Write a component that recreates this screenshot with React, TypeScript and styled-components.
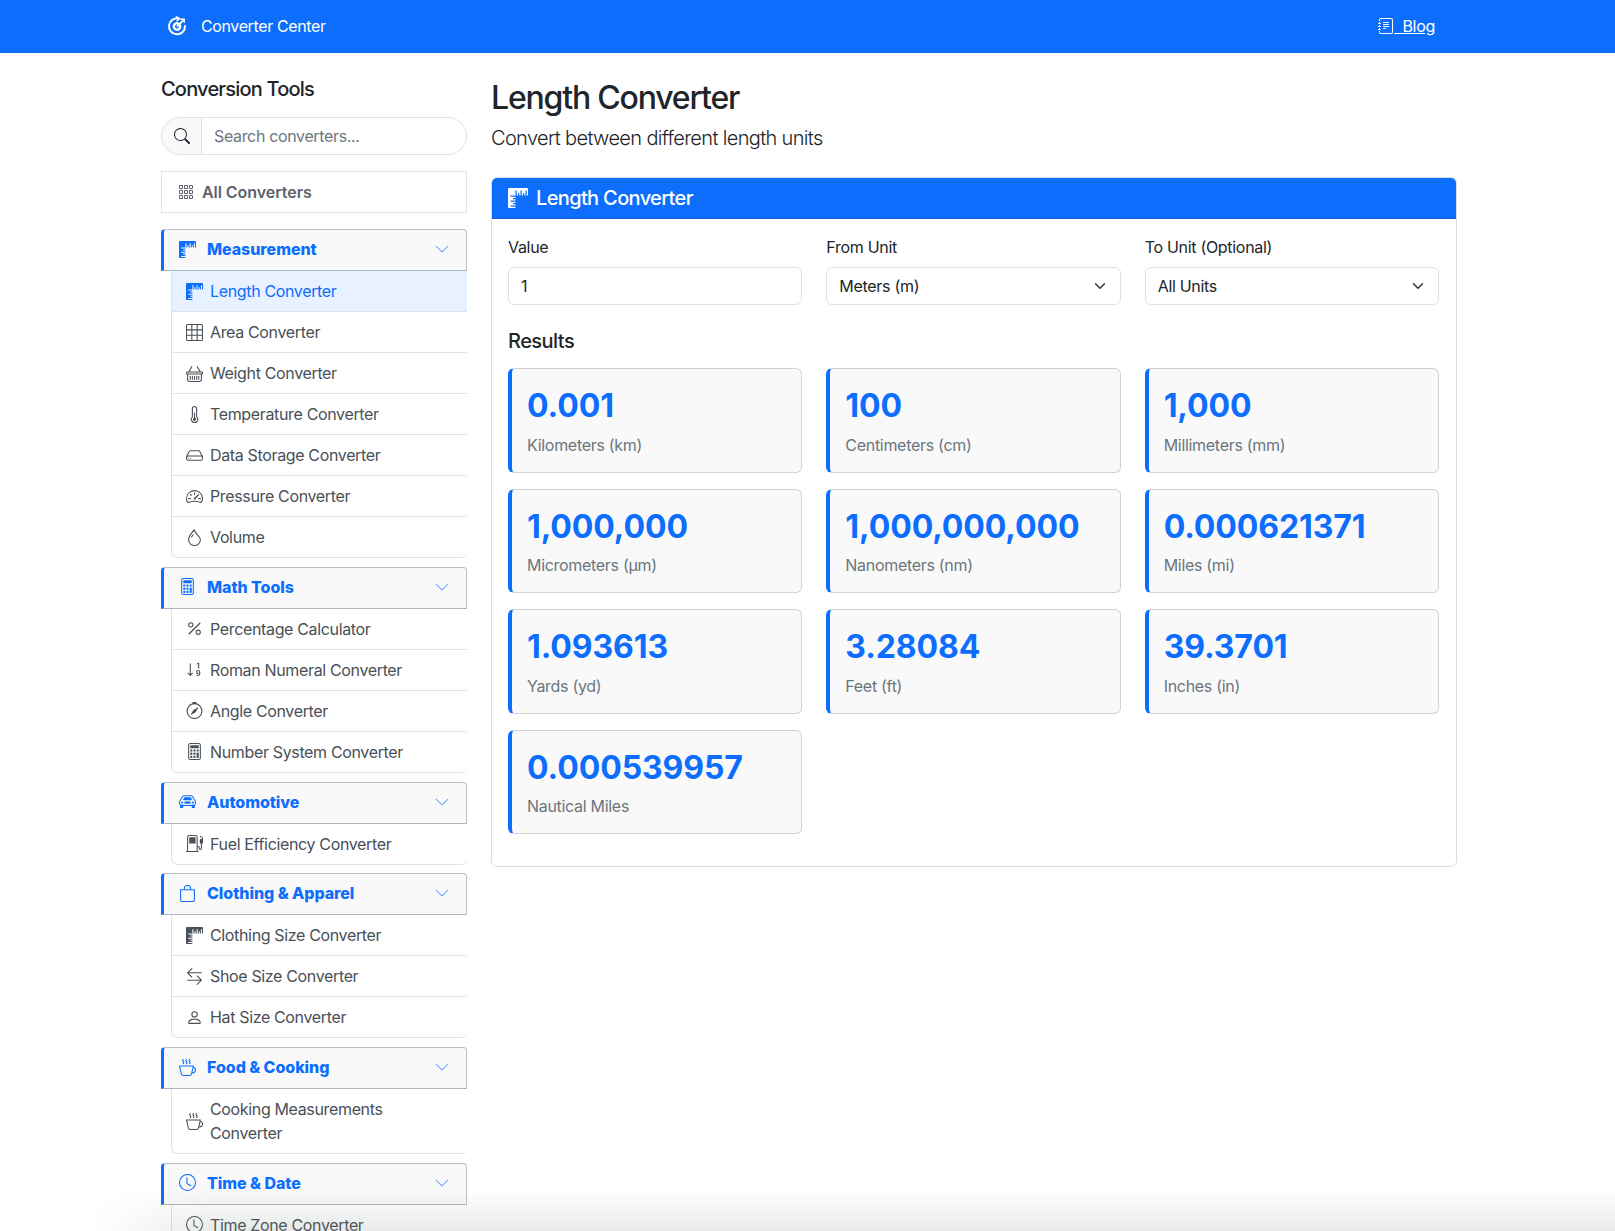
import React from "react";
import styled, { createGlobalStyle } from "styled-components";
import {
  BsRulers, BsGrid3X3, BsBasket, BsThermometerHalf, BsHdd, BsSpeedometer2, BsDroplet,
  BsCalculator, BsPercent, BsSortNumericDown, BsCompass, BsCarFront, BsFuelPump, BsBag,
  BsArrowLeftRight, BsPerson, BsCupHot, BsClock, BsGrid3X3Gap, BsJournalText, BsSearch, BsChevronDown,
} from "react-icons/bs";

const GlobalStyle = createGlobalStyle`
  html, body { margin: 0; padding: 0; height: 100%; overflow: hidden; background: #fff; }
  body { font-family: Inter, "Liberation Sans", sans-serif; font-size: 16px; line-height: 1.5; color: #212529; letter-spacing: -0.3px; }
  * { box-sizing: border-box; }
`;

const Navbar = styled.header`
  height: 53px;
  background: #0d6efd;
  display: flex;
  justify-content: center;
`;
const NavInner = styled.div`
  width: 1320px;
  margin-left: 3px;
  padding: 0 34px 2px 18px;
  display: flex;
  align-items: center;
  justify-content: space-between;
`;
const Brand = styled.div`
  display: flex;
  align-items: center;
  gap: 14px;
  color: #fff;
  font-size: 16px;
  font-weight: 400;
  letter-spacing: -0.38px;
`;
const BlogLink = styled.a`
  color: #fff;
  font-size: 16px;
  text-decoration: underline;
  white-space: pre;
  svg { vertical-align: -2px; margin-left: 1px; }
`;

const Layout = styled.div`
  width: 1320px;
  margin-left: 149px;
  display: flex;
  align-items: flex-start;
  padding-top: 24px;
`;
const Sidebar = styled.aside`
  width: 330px;
  padding: 0 12px;
  flex: none;
`;
const SideTitle = styled.h5`
  margin: 0 0 16px;
  font-size: 20px;
  line-height: 24px;
  font-weight: 500;
  letter-spacing: -0.8px;
`;
const SearchGroup = styled.div`
  display: flex;
  height: 38px;
  margin-bottom: 16px;
`;
const SearchAddon = styled.span`
  width: 41px;
  display: flex;
  align-items: center;
  justify-content: center;
  background: #f8f9fa;
  border: 1px solid #dee2e6;
  border-radius: 19px 0 0 19px;
  color: #212529;
`;
const SearchInput = styled.input`
  flex: 1;
  min-width: 0;
  margin-left: -1px;
  padding: 0 12px;
  font: inherit;
  letter-spacing: -0.35px;
  border: 1px solid #dee2e6;
  border-radius: 0 19px 19px 0;
  color: #212529;
  &::placeholder { color: #6c757d; opacity: 1; }
`;
const AllLink = styled.a`
  height: 42px;
  display: flex;
  align-items: center;
  gap: 8px;
  padding-left: 16px;
  border: 1px solid #dee2e6;
  margin-bottom: 16px;
  font-weight: 600;
  letter-spacing: -0.05px;
  color: #5c636a;
`;
const Group = styled.section`
  margin-bottom: 8.8px;
`;
const GroupHeader = styled.div`
  height: 42px;
  display: flex;
  align-items: center;
  padding: 0 16px 2px 15px;
  background: #f9f9f9;
  border: 1px solid #bcbfc4;
  border-left: 3px solid #0d6efd;
  border-bottom-color: #adb5bd;
  border-radius: 4px 4px 0 0;
  color: #0d6efd;
  font-weight: 800;
  letter-spacing: -0.05px;
`;
const GroupIcon = styled.span`
  width: 17px;
  margin-right: 11px;
  display: flex;
  justify-content: center;
  flex: none;
`;
const GroupName = styled.span`
  flex: 1;
`;
const Chevron = styled(BsChevronDown)`
  color: #5b9dfd;
  margin-right: 0;
`;
const ItemList = styled.ul`
  list-style: none;
  margin: 0 0 0 10px;
  padding: 0;
  border-left: 1px solid #dee2e6;
  border-radius: 0 0 6px 6px;
`;
const Item = styled.li<{ $active?: boolean }>`
  display: flex;
  align-items: center;
  padding: 8px 0 8px 13px;
  border-bottom: 1px solid #dee2e6;
  letter-spacing: -0.35px;
  color: ${(p) => (p.$active ? "#0d6efd" : "#495057")};
  background: ${(p) => (p.$active ? "#e7f1ff" : "#fff")};
  &:last-child { border-radius: 0 0 6px 6px; }
`;
const ItemIcon = styled.span`
  width: 18px;
  margin-right: 7px;
  display: flex;
  justify-content: center;
  flex: none;
`;
const ItemText = styled.span`
  max-width: 215px;
`;

const Main = styled.main`
  flex: 1;
  min-width: 0;
  padding: 2px 12px 0;
`;
const PageTitle = styled.h1`
  margin: 0 0 6px;
  font-size: 32px;
  line-height: 38.4px;
  font-weight: 500;
  letter-spacing: -1.2px;
`;
const Lead = styled.p`
  margin: 0 0 24px;
  font-size: 20px;
  line-height: 30px;
  font-weight: 300;
  letter-spacing: -0.65px;
`;
const Card = styled.section`
  border: 1px solid #dcdcdc;
  border-radius: 6px;
  background: #fff;
`;
const CardHeader = styled.div`
  height: 41px;
  display: flex;
  align-items: center;
  gap: 8px;
  padding: 0 16px;
  background: #0d6efd;
  color: #fff;
  border-bottom: 1px solid #0b5ed7;
  border-radius: 5px 5px 0 0;
  font-size: 20px;
  font-weight: 500;
  letter-spacing: -0.65px;
`;
const CardBody = styled.div`
  padding: 16px 17px 16px 16px;
`;
const Columns = styled.div`
  display: grid;
  grid-template-columns: repeat(3, 1fr);
  column-gap: 24px;
`;
const Field = styled.div`
  display: flex;
  flex-direction: column;
`;
const Label = styled.label`
  margin-bottom: 8px;
`;
const TextInput = styled.input`
  height: 38px;
  padding: 0 12px;
  font: inherit;
  letter-spacing: inherit;
  color: #212529;
  background: #fff;
  border: 1px solid #dee2e6;
  border-radius: 6px;
`;
const Select = styled.select`
  height: 38px;
  padding: 0 36px 0 12px;
  font: inherit;
  letter-spacing: inherit;
  color: #212529;
  appearance: none;
  border: 1px solid #dee2e6;
  border-radius: 6px;
  background: #fff url("data:image/svg+xml,%3csvg xmlns='http://www.w3.org/2000/svg' viewBox='0 0 16 16'%3e%3cpath fill='none' stroke='%23343a40' stroke-linecap='round' stroke-linejoin='round' stroke-width='2' d='m2 5 6 6 6-6'/%3e%3c/svg%3e") no-repeat right 12px center / 16px 12px;
`;
const ResultsTitle = styled.h5`
  margin: 24px 0 15px;
  font-size: 20px;
  line-height: 24px;
  font-weight: 500;
  letter-spacing: -0.55px;
`;
const ResultGrid = styled(Columns)`
  row-gap: 16px;
  margin-bottom: 16px;
`;
const ResultCard = styled.div`
  padding: 16px 15px 15px;
  background: #f9f9f9;
  border: 1px solid #d2d2d2;
  border-left: 4px solid #0d6efd;
  border-radius: 6px;
`;
const ResultValue = styled.div`
  padding-top: 2px;
  font-size: 32px;
  line-height: 38.4px;
  font-weight: 700;
  letter-spacing: -0.1px;
  color: #0d6efd;
  margin-bottom: 7px;
`;
const ResultLabel = styled.div`
  color: #6c757d;
`;
const BottomFade = styled.div`
  position: fixed;
  left: 0;
  right: 0;
  bottom: 0;
  height: 42px;
  pointer-events: none;
  background: linear-gradient(to bottom, rgba(120,130,130,0), rgba(120,130,130,0.17));
  mask-image: linear-gradient(to right, transparent 90px, #000 210px);
`;

const Logo = () => (
  <svg width="20" height="20" viewBox="0 0 20 20" fill="none" stroke="#fff" strokeWidth="2" strokeLinecap="round" aria-hidden="true">
    <path d="M12 2.6A8 8 0 1 0 18 10" />
    <path d="M9.5 .8 12.4 2.6 10 4.8" strokeWidth="1.5" />
    <circle cx="10" cy="10.5" r="3.2" strokeWidth="2.4" strokeDasharray="2 0.8" />
    <path d="M10.5 10 16 4.6" strokeWidth="1.8" />
    <path d="M14 3.2h3.2v3" strokeWidth="1.4" />
  </svg>
);

type Entry = { icon: React.ReactNode; name: string; active?: boolean };
type Section = { icon: React.ReactNode; name: string; items: Entry[] };

const sections: Section[] = [
  {
    icon: <BsRulers size={17} />,
    name: "Measurement",
    items: [
      { icon: <BsRulers size={17} />, name: "Length Converter", active: true },
      { icon: <BsGrid3X3 size={17} />, name: "Area Converter" },
      { icon: <BsBasket size={17} />, name: "Weight Converter" },
      { icon: <BsThermometerHalf size={17} />, name: "Temperature Converter" },
      { icon: <BsHdd size={17} />, name: "Data Storage Converter" },
      { icon: <BsSpeedometer2 size={17} />, name: "Pressure Converter" },
      { icon: <BsDroplet size={17} />, name: "Volume" },
    ],
  },
  {
    icon: <BsCalculator size={17} />,
    name: "Math Tools",
    items: [
      { icon: <BsPercent size={17} />, name: "Percentage Calculator" },
      { icon: <BsSortNumericDown size={17} />, name: "Roman Numeral Converter" },
      { icon: <BsCompass size={17} />, name: "Angle Converter" },
      { icon: <BsCalculator size={17} />, name: "Number System Converter" },
    ],
  },
  {
    icon: <BsCarFront size={17} />,
    name: "Automotive",
    items: [{ icon: <BsFuelPump size={17} />, name: "Fuel Efficiency Converter" }],
  },
  {
    icon: <BsBag size={17} />,
    name: "Clothing & Apparel",
    items: [
      { icon: <BsRulers size={17} />, name: "Clothing Size Converter" },
      { icon: <BsArrowLeftRight size={17} />, name: "Shoe Size Converter" },
      { icon: <BsPerson size={17} />, name: "Hat Size Converter" },
    ],
  },
  {
    icon: <BsCupHot size={17} />,
    name: "Food & Cooking",
    items: [{ icon: <BsCupHot size={17} />, name: "Cooking Measurements Converter" }],
  },
  {
    icon: <BsClock size={17} />,
    name: "Time & Date",
    items: [{ icon: <BsClock size={17} />, name: "Time Zone Converter" }],
  },
];

const results = [
  ["0.001", "Kilometers (km)"],
  ["100", "Centimeters (cm)"],
  ["1,000", "Millimeters (mm)"],
  ["1,000,000", "Micrometers (µm)"],
  ["1,000,000,000", "Nanometers (nm)"],
  ["0.000621371", "Miles (mi)"],
  ["1.093613", "Yards (yd)"],
  ["3.28084", "Feet (ft)"],
  ["39.3701", "Inches (in)"],
  ["0.000539957", "Nautical Miles"],
];

export default function App() {
  return (
    <>
      <GlobalStyle />
      <Navbar>
        <NavInner>
          <Brand>
            <Logo />
            Converter Center
          </Brand>
          <BlogLink href="#">
            <BsJournalText size={16} />
            {"  Blog"}
          </BlogLink>
        </NavInner>
      </Navbar>
      <Layout>
        <Sidebar>
          <SideTitle>Conversion Tools</SideTitle>
          <SearchGroup>
            <SearchAddon>
              <BsSearch size={16} />
            </SearchAddon>
            <SearchInput placeholder="Search converters..." />
          </SearchGroup>
          <AllLink>
            <BsGrid3X3Gap size={16} />
            All Converters
          </AllLink>
          {sections.map((s) => (
            <Group key={s.name}>
              <GroupHeader>
                <GroupIcon>{s.icon}</GroupIcon>
                <GroupName>{s.name}</GroupName>
                <Chevron size={16} />
              </GroupHeader>
              <ItemList>
                {s.items.map((i) => (
                  <Item key={i.name} $active={i.active}>
                    <ItemIcon>{i.icon}</ItemIcon>
                    <ItemText>{i.name}</ItemText>
                  </Item>
                ))}
              </ItemList>
            </Group>
          ))}
        </Sidebar>
        <Main>
          <PageTitle>Length Converter</PageTitle>
          <Lead>Convert between different length units</Lead>
          <Card>
            <CardHeader>
              <BsRulers size={20} />
              Length Converter
            </CardHeader>
            <CardBody>
              <Columns>
                <Field>
                  <Label>Value</Label>
                  <TextInput defaultValue="1" />
                </Field>
                <Field>
                  <Label>From Unit</Label>
                  <Select defaultValue="m">
                    <option value="m">Meters (m)</option>
                  </Select>
                </Field>
                <Field>
                  <Label>To Unit (Optional)</Label>
                  <Select defaultValue="all">
                    <option value="all">All Units</option>
                  </Select>
                </Field>
              </Columns>
              <ResultsTitle>Results</ResultsTitle>
              <ResultGrid>
                {results.map(([v, l]) => (
                  <ResultCard key={l}>
                    <ResultValue>{v}</ResultValue>
                    <ResultLabel>{l}</ResultLabel>
                  </ResultCard>
                ))}
              </ResultGrid>
            </CardBody>
          </Card>
        </Main>
      </Layout>
      <BottomFade />
    </>
  );
}
